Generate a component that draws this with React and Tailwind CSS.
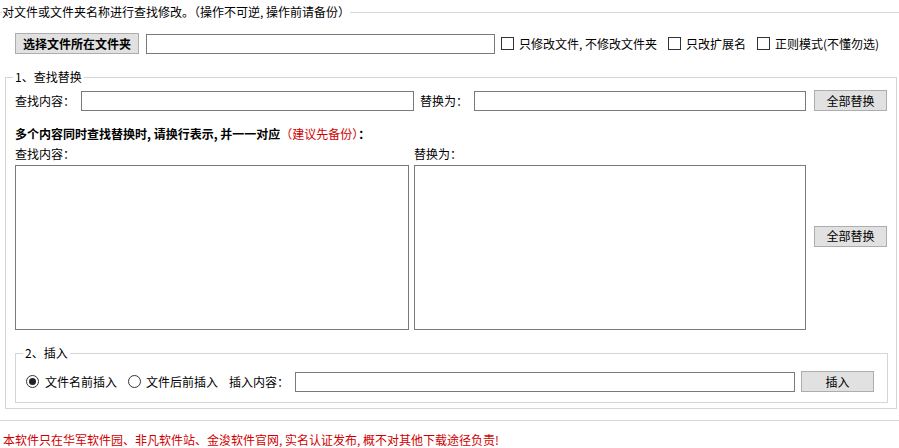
import React from "react";

const font = { fontFamily: '"Noto Sans CJK SC", "Liberation Sans", sans-serif' };

function Box() {
  return <span className="inline-block h-[13px] w-[13px] shrink-0 border border-[#333] bg-white" />;
}

function Radio({ on }) {
  return (
    <span className="flex h-[13px] w-[13px] shrink-0 items-center justify-center rounded-full border border-[#333] bg-white">
      {on && <span className="h-[7px] w-[7px] rounded-full bg-[#222]" />}
    </span>
  );
}

function Btn({ children, className = "" }) {
  return (
    <button className={"flex h-[21px] items-center justify-center border border-[#adadad] bg-[#e1e1e1] text-[12px] text-black " + className}>
      {children}
    </button>
  );
}

function Field({ className = "" }) {
  return <input className={"h-[20px] border border-[#7a7a7a] bg-white outline-none " + className} />;
}

export default function App() {
  return (
    <div className="h-[448px] w-[899px] bg-white text-[12px] leading-[16px] text-black" style={font}>
      {/* Outer group */}
      <fieldset className="mt-1 w-[899px] border-y border-[#d8d8d8] pb-[11px] pl-[2px]">
        <legend className="px-0 leading-[16px]">对文件或文件夹名称进行查找修改。（操作不可逆, 操作前请备份）</legend>

        <div className="flex items-center pl-[13px] pt-[13px]">
          <Btn className="w-[124px] font-bold">选择文件所在文件夹</Btn>
          <Field className="ml-[7px] w-[349px]" />
          <label className="ml-[6px] flex items-center gap-[5px]">
            <Box />
            <span>只修改文件, 不修改文件夹</span>
          </label>
          <label className="ml-[11px] flex items-center gap-[5px]">
            <Box />
            <span>只改扩展名</span>
          </label>
          <label className="ml-[11px] flex items-center gap-[5px]">
            <Box />
            <span>正则模式(不懂勿选)</span>
          </label>
        </div>

        {/* 1 - find / replace */}
        <fieldset className="ml-[3px] mt-[15px] w-[892px] border border-[#d5d5d5] pb-[5px] pl-[9px]">
          <legend className="-ml-[2px] px-0.5 leading-[16px]">1、查找替换</legend>

          <div className="flex items-center pt-[5px]">
            <span className="w-[66px]">查找内容：</span>
            <Field className="w-[333px]" />
            <span className="ml-[6px] w-[54px]">替换为：</span>
            <Field className="w-[332px]" />
            <Btn className="ml-[8px] w-[73px]">全部替换</Btn>
          </div>

          <div className="mt-[15px] font-bold">
            多个内容同时查找替换时, 请换行表示, 并一一对应<span className="font-normal text-[#d00000]">（建议先备份）</span>：
          </div>

          <div className="mt-[4px] flex items-center">
            <div className="flex w-[399px] flex-col gap-[3px]">
              <span>查找内容：</span>
              <textarea className="h-[165px] w-[394px] resize-none border border-[#7a7a7a] bg-white outline-none" />
            </div>
            <div className="flex w-[392px] flex-col gap-[3px]">
              <span>替换为：</span>
              <textarea className="h-[165px] w-[392px] resize-none border border-[#7a7a7a] bg-white outline-none" />
            </div>
            <Btn className="-mt-[4px] ml-[8px] w-[73px]">全部替换</Btn>
          </div>

          {/* 2 - insert */}
          <fieldset className="mt-[15px] w-[873px] border border-[#d5d5d5] pb-[10px] pl-[10px]">
            <legend className="-ml-[3px] px-0.5 leading-[16px]">2、插入</legend>
            <div className="flex items-center pt-[10px]">
              <label className="flex items-center gap-[6px]">
                <Radio on />
                <span>文件名前插入</span>
              </label>
              <label className="ml-[11px] flex items-center gap-[5px]">
                <Radio />
                <span>文件后前插入</span>
              </label>
              <span className="ml-[11px] w-[66px]">插入内容：</span>
              <Field className="w-[500px]" />
              <Btn className="ml-[6px] w-[73px]">插入</Btn>
            </div>
          </fieldset>
        </fieldset>
      </fieldset>

      <div className="mt-[11px] pl-[3px] text-[#d00000]">
        本软件只在华军软件园、非凡软件站、金浚软件官网, 实名认证发布, 概不对其他下载途径负责!
      </div>
    </div>
  );
}
